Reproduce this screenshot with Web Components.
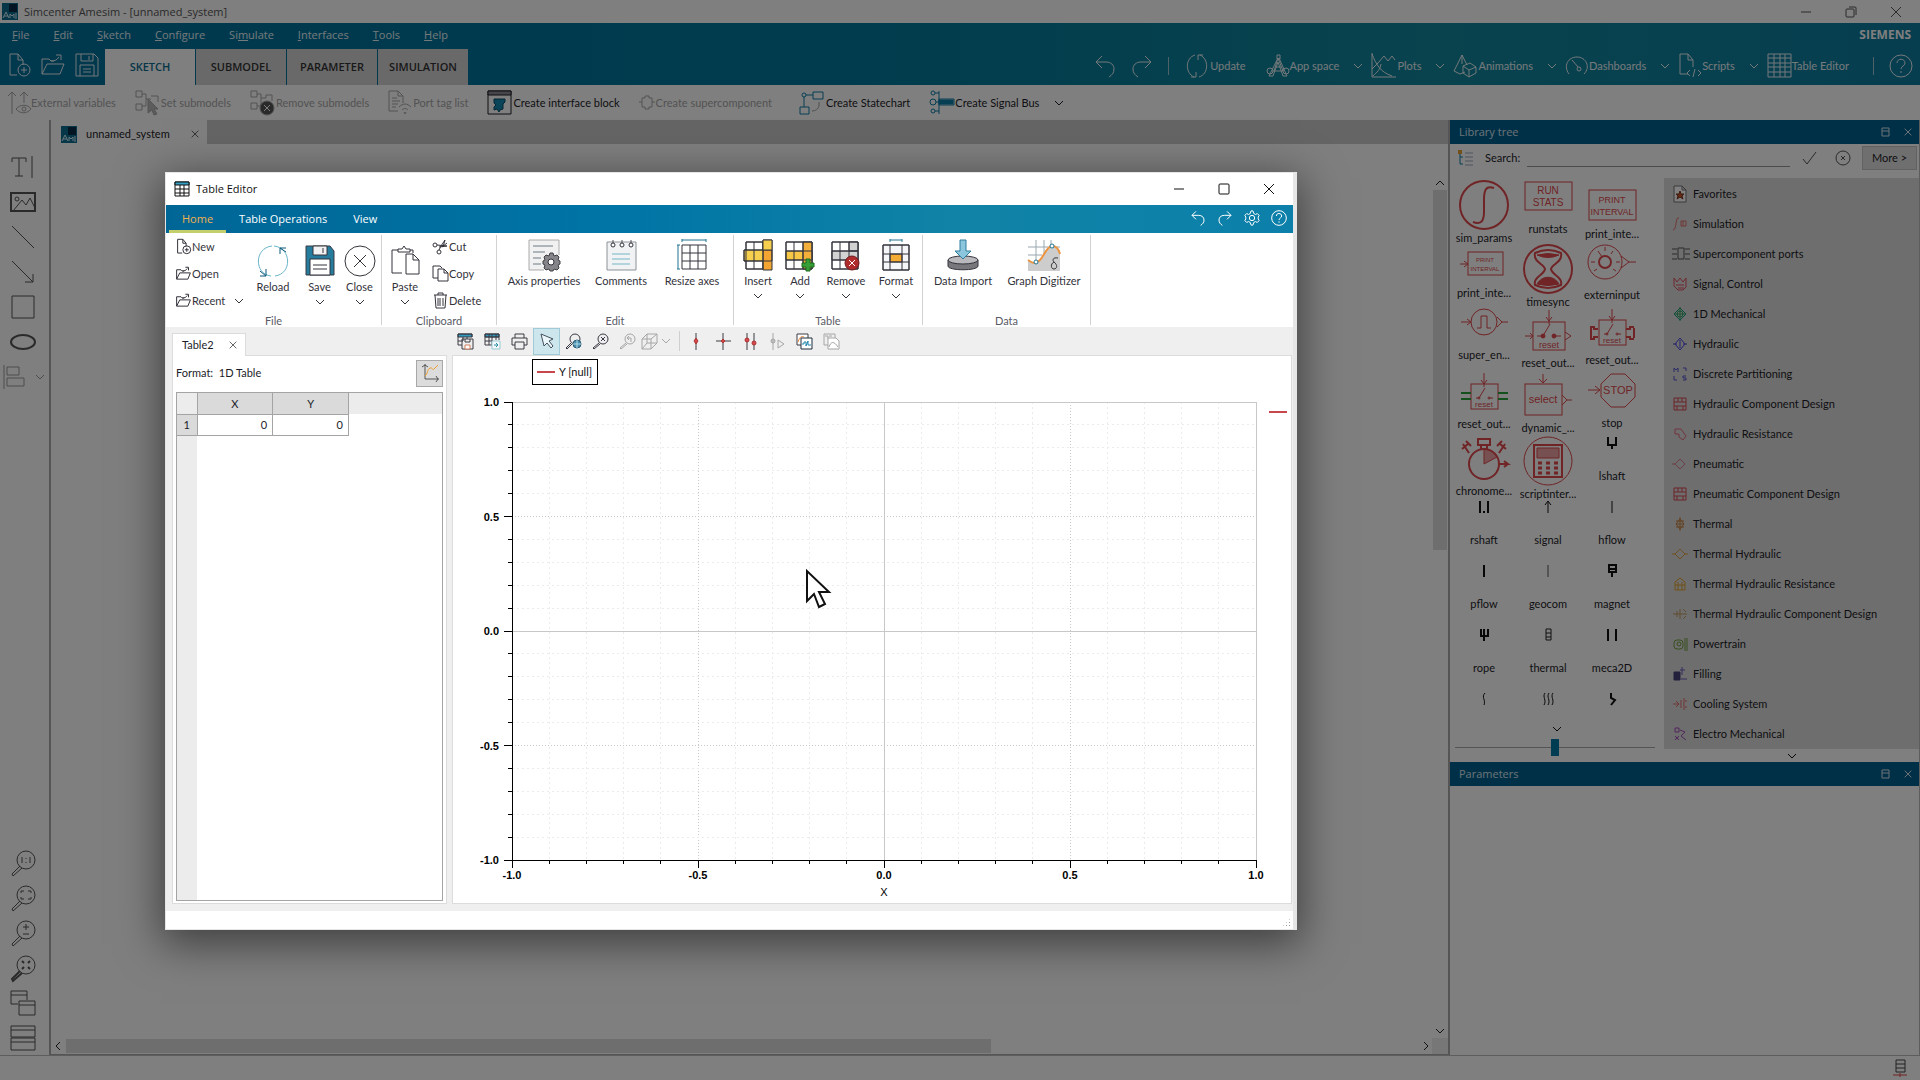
<!DOCTYPE html>
<html lang="en">
<head>
<meta charset="utf-8">
<title>Simcenter Amesim - [unnamed_system]</title>
<style>
  html, body {
    height: 100%;
    margin: 0;
  }
  body {
    --ui-font: Lato, "Open Sans", sans-serif;
    --title-font: "Open Sans", "Noto Sans", sans-serif;
    --red: #e0484c;
    font: 11px/16px var(--ui-font);
    color: #1c1c28;
    background: #fff;
    overflow: hidden;
  }
</style>
</head>
<body>
<amesim-app></amesim-app>

<script>
// name: [width, height, markup]
const ICONS = {
  chevron: [12, 8, '<path d="M2 2l4 4 4-4"/>'],
  close: [12, 12, '<path d="M1 1l10 10M11 1L1 11"/>'],
  minimize: [12, 12, '<path d="M1 6h10"/>'],
  maximize: [12, 12, '<rect x="1" y="1" width="10" height="10" rx="1"/>'],
  restore: [12, 12, '<rect x="1" y="3" width="8" height="8" rx="1"/><path d="M4 1h6q1 0 1 1v7"/>'],
  dock: [10, 10, '<path d="M1 1h7v8h-7zM1 4h7"/>'],
  ame: [16, 17, '<path d="M0 0h16v17H0z" fill="#0a6f93" stroke="none"/><path d="M7 1h8v8H7z" fill="#062b45" stroke="none"/><path d="M1 15l3-6 3 6M2 13h4M8 15v-4l2 2 2-2v4M13 11h2M13 13h2M13 15h2" stroke="#d6eef5"/>'],
  new: [24, 26, '<path d="M10 23H3V2h8l5 6v5M11 2v6h5"/><circle cx="17" cy="18" r="6"/><path d="M14 18h6M17 15v6"/>'],
  open: [24, 24, '<path d="M1 21V6h7l2 2h3M1 21l5-10h17l-4 10H1zM10 8c4 0 6-1 8-4M15 2h5v5"/>'],
  save: [24, 24, '<path d="M1 1h18l4 4v18H1zM6 1v7h12V1M14 3v4M5 23V12h14v11M8 16h8M8 19h8"/>'],
  undo: [22, 24, '<path d="M8 2L2 8l6 6M2 8h10c5 0 8 3 8 7s-2 6-5 8"/>'],
  redo: [22, 24, '<path d="M14 2l6 6-6 6M20 8H10c-5 0-8 3-8 7s2 6 5 8"/>'],
  update: [26, 26, '<path d="M10 24C1 20 1 5 11 2M7 24h5v-5M16 2c9 4 9 19-1 22M19 2h-5v5"/>'],
  appspace: [24, 24, '<path d="M8 17l4-13 5 13M10 13h5M11 1h3v4h-3z"/><circle cx="4" cy="17" r="3"/><circle cx="20" cy="17" r="3"/><path d="M7 17h10M12 4L3 22h4l5-14 5 14h4L13 4"/>'],
  plots: [26, 25, '<path d="M1 0v24h24M1 16l6-6 6-7 4 5 4-5 3 4M1 1c4 10 8 18 20 22M2 23c4-4 7-6 8-12"/>'],
  animations: [25, 25, '<path d="M9 2L1 18l6 3 5-2M9 2l5 10M9 2v9"/><path d="M10 13l7-3 6 4v6l-7 4-6-4zM10 13l6 4 7-3M16 17v7"/>'],
  dashboards: [24, 24, '<path d="M4 20C-2 12 3 3 12 3s14 10 7 17"/><circle cx="14" cy="15" r="2"/><path d="M13 13L7 6"/>'],
  scripts: [24, 25, '<path d="M10 21H2V1h8l5 6v7M10 1v6h5M12 17l-3 3 3 3M20 17l3 3-3 3M17 16l-2 8"/>'],
  grid: [25, 25, '<path d="M1 1h23v23H1zM1 5h23M1 10h23M1 14h23M1 19h23M7 1v23M13 1v23M18 1v23"/>'],
  help: [24, 24, '<circle cx="12" cy="12" r="11"/><path d="M8 9c0-5 8-5 8 0 0 3-4 3-4 6M12 17v2"/>'],
  gear: [18, 18, '<path d="M8 1h2l1 3 2 1 2-1 2 2-1 2v2l1 2-2 2-2-1-2 1-1 3H8l-1-3-2-1-2 1-2-2 1-2V8L1 6l2-2 2 1 2-1z"/><circle cx="9" cy="9" r="3"/>'],

  external: [24, 25, '<path d="M6 24V2M2 6l4-4 4 4M18 13V2M14 6l4-4 4 4"/><path d="M10 19c4-5 12-5 15 0-4 5-11 5-15 0z"/><circle cx="18" cy="19" r="2"/>'],
  setsub: [25, 25, '<path d="M1 1h6v6H1zM1 14h6v6H1zM7 4h4v12H7M11 9h5M16 6h7v6"/><path d="M13 9l10 10-4 0 3 5-3 1-2-5-4 3z" fill="#b8b8b8"/>'],
  removesub: [25, 25, '<path d="M1 1h6v6H1zM1 13h6v6H1zM7 4h4v12H7M11 8h5V5h6v6"/><circle cx="17" cy="18" r="7" fill="#555"/><path d="M14 15l6 6M20 15l-6 6" stroke="#fff"/>'],
  porttag: [24, 25, '<path d="M10 21H1V1h9l5 5v7M10 1v5h5M4 8h5M4 11h8M4 14h6M4 17h4"/><path d="M11 17c4-4 8-4 12 0M14 20c2-2 4-2 6 0M16 22l1 2 1-2"/>'],
  interface: [25, 25, '<path d="M1 1h23v23H1z"/><path d="M1 1h23v4H1z" fill="#8f8f96"/><path d="M7 9h11v3l-2 2v5l-3 1-1 2-2-3-3 1v-3l2-2-2-2z" fill="#1488b0" stroke="#0b4c66"/>'],
  supercomp: [16, 16, '<path d="M3 3h3V1h4v2h3v9h-3v2H6v-2H3zM0 7h3M13 7h3"/>'],
  statechart: [26, 25, '<g stroke="#0c7ca6"><path d="M14 2h10v7H14zM1 17h9v7H1zM5 17V7M7 5h7"/><circle cx="5" cy="5" r="2"/></g><path d="M20 12v3c0 4-4 6-7 6" stroke="#999"/>'],
  signalbus: [25, 25, '<g stroke="#0c7ca6"><circle cx="4" cy="3" r="2"/><circle cx="4" cy="12" r="3"/><circle cx="4" cy="21" r="2"/><path d="M10 1v23M6 3h4M7 12h3M6 21h4M10 9h15v6H10z"/><path d="M10 10h14v4H10z" fill="#0c7ca6"/></g>'],

  text: [24, 24, '<path d="M1 7V3h14v4M8 3v18M4 21h8M21 1v22"/>'],
  image: [26, 20, '<path d="M1 1h24v18H1z" stroke-width="2"/><circle cx="7" cy="7" r="2"/><path d="M3 19l9-11 4 5 4-7 5 10"/>'],
  line: [24, 24, '<path d="M1 1l22 22"/>'],
  arrow: [24, 24, '<path d="M1 1l21 21M14 22h8v-8"/>'],
  rect: [24, 24, '<path d="M1 1h22v22H1z"/>'],
  ellipse: [26, 16, '<ellipse cx="13" cy="8" rx="12" ry="7" stroke-width="2"/>'],
  align: [24, 24, '<path d="M1 0v24M4 2h12v8H4zM4 13h17v8H4z"/>'],
  zoom11: [26, 26, '<circle cx="16" cy="10" r="9"/><path d="M10 16l-8 8 1 2 9-8M12 7v6M20 7v6M16 8v1M16 12v1"/>'],
  zoomfit: [26, 26, '<circle cx="16" cy="10" r="9"/><path d="M10 16l-8 8 1 2 9-8M11 8V6h3M18 6h3v2M21 12v2h-3M14 14h-3v-2"/>'],
  zoompm: [26, 26, '<circle cx="16" cy="10" r="9"/><path d="M10 16l-8 8 1 2 9-8M13 7h6M16 4v6M13 14h6"/>'],
  zoomall: [26, 26, '<circle cx="16" cy="10" r="9"/><path d="M10 16l-8 8 1 2 9-8M12 6l2 2M20 6l-2 2M12 14l2-2M20 14l-2-2" stroke-width="2"/>'],
  cascade: [26, 26, '<path d="M8 14H1V1h16v9M1 5h16M9 11h16v14H9zM9 15h16"/>'],
  stack: [26, 26, '<path d="M1 1h24v11H1zM1 5h24M1 13h24v12H1zM1 17h24"/>'],
  server: [14, 18, '<path d="M3 1h9v12H3zM3 5h9M3 9h9"/><path d="M0 16h14M7 14v4" stroke="#e0484c"/>'],
  treeicon: [18, 18, '<path d="M4 4v11h3M4 8h3" stroke="#0c7ca6"/><path d="M2 1h4v4H2z" fill="#e8a030" stroke="none"/><path d="M9 4h8M9 8h8M9 12h8M9 16h8" stroke="#9ab"/>'],
  check: [16, 16, '<path d="M1 9l4 5L14 2"/>'],
  cancel: [18, 18, '<circle cx="9" cy="9" r="7"/><path d="M7 7l4 4M11 7l-4 4"/>'],

  tablegrid: [16, 16, '<path d="M1 1h14v14H1z"/><path d="M1 1h14v3H1z" fill="#35a0c4"/><path d="M1 8h14M1 12h14M6 4v11M10 4v11"/>'],
  reload: [32, 32, '<g stroke="#2f97b5"><path d="M14 31C-3 29-3 3 15 1M18 31C35 29 35 3 17 1" stroke="#69b5c9"/><path d="M3 31h6v-7M29 3h-6v6M23 3l6 4M9 31l-6-5" stroke="#0b5878"/></g>'],
  floppy: [30, 31, '<path d="M1 1h24l4 5v24H1z" fill="#257c9c" stroke="#3a3a44"/><path d="M8 1h14v9H8z" fill="#f2f2f2"/><path d="M18 3v5"/><path d="M5 30V14h20v16z" fill="#fff"/><path d="M8 20h14M8 24h14"/>'],
  closecircle: [32, 32, '<circle cx="16" cy="16" r="15"/><path d="M10 10l12 12M22 10L10 22"/>'],
  paste: [29, 30, '<path d="M11 28H1V5h6M19 5h3v3M7 7V4h4l2-3 2 3h4v3zM15 9h7l6 6v14H15zM22 9v6h6"/>'],
  cut: [17, 16, '<circle cx="3" cy="6" r="2"/><circle cx="7" cy="13" r="2"/><path d="M5 6l10 1-8 1M7 11l2-4 4-6-2 7M10 8l5-4"/>'],
  copy: [17, 17, '<path d="M6 13H1V1h7l2 2M6 4h6l4 4v8H6zM12 4v4h4"/>'],
  trash: [17, 17, '<path d="M2 3h13M6 3V1h5v2M3 3l1 13h9l1-13M6 6v8M8 6v8M11 6v8"/>'],
  axisprops: [32, 32, '<path d="M1 1h30v18L19 31H1z" fill="#f1f1f1" stroke="none"/><path d="M1 31V1h30v15M1 31h15" stroke="#aaa"/><path d="M5 7h20M5 13h12M5 19h8M5 25h8" stroke="#6a7a84"/><path d="M22 14h3l1 3 3-1 2 2-1 3 2 1v3l-2 1 1 3-2 2-3-1-1 2h-3l-1-2-3 1-2-2 1-3-2-1v-3l2-1-1-3 2-2 3 1z" fill="#85858a" stroke="#3e3e44"/><circle cx="23" cy="23" r="3" fill="#fff"/>'],
  comments: [31, 32, '<path d="M1 3h29v28H1z" fill="#f0f2f3" stroke="#8c9296"/><path d="M7 1v4M16 1v4M25 1v4" stroke="#555"/><circle cx="7" cy="6" r="2" fill="#fff"/><circle cx="16" cy="6" r="2" fill="#fff"/><circle cx="25" cy="6" r="2" fill="#fff"/><path d="M6 15h18M6 20h18M6 25h18" stroke="#74b6c8"/>'],
  resizeaxes: [30, 32, '<path d="M5 6h24v24H5zM5 14h24M5 22h24M13 6v24M21 6v24"/><path d="M5 1h24M5 0v3M29 0v3M1 6v24M0 6h3M0 30h3" stroke="#1f7391"/>'],
  insert: [30, 32, '<path d="M3 3h17v27H3z" fill="#fff"/><path d="M1 11h20v11H1z" fill="#f7cf4e"/><path d="M20 1h9v30h-9z" fill="#f2a531"/><path d="M3 3h17v27H3zM11 3v27M1 11h28v11H1z"/><path d="M20 1h9v10h-9z" fill="#f7cf4e"/>'],
  addcell: [30, 32, '<path d="M1 3h26v27H1z" fill="#fff"/><path d="M1 12h26v9H1z" fill="#f7c846"/><path d="M18 3h9v27h-9z" fill="#f2b03a"/><path d="M1 3h26v27H1zM1 12h26M1 21h26M9 3v27M18 3v27"/><path d="M21 20h4v4h4v4h-4v4h-4v-4h-4v-4h4z" fill="#36a036" stroke="#1c6b1c"/>'],
  removecell: [30, 32, '<path d="M1 3h26v27H1z" fill="#fff"/><path d="M1 12h26v9H1zM18 3h9v9h-9z" fill="#d2d2d2"/><path d="M1 3h26v27H1zM1 12h26M1 21h26M9 3v27M18 3v27"/><circle cx="21" cy="24" r="7" fill="#b02c2c" stroke="#6d1d1d"/><path d="M18 21l6 6M24 21l-6 6" stroke="#fff"/>'],
  format: [28, 32, '<path d="M1 6h26v25H1z" fill="#f4f6f8"/><path d="M8 15h12v8H8z" fill="#f4ac34"/><path d="M1 6h26v25H1zM1 15h26M1 23h26M8 6v25M20 6v25"/><path d="M8 1h12M8 0v3M20 0v3" stroke="#1f7391"/>'],
  dataimport: [32, 32, '<path d="M1 21v6c0 5 30 5 30 0v-6" fill="#77777c"/><ellipse cx="16" cy="21" rx="15" ry="4" fill="#b9b9bd"/><path d="M13 1h6v11h5l-8 8-8-8h5z" fill="#8cc6dc" stroke="#2f7d9c"/>'],
  digitizer: [32, 32, '<path d="M0 21c6 3 8 4 12 0s7-14 12-14 7 4 8 8v17H0z" fill="#cdcdcd" stroke="none"/><path d="M8 1v20M16 1v14M23 1v6M0 8h20M0 16h14M27 8h5" stroke="#9aa8b0"/><path d="M0 21c6 4 8 4 12 0s7-14 12-14 7 4 8 8" stroke="#ec9440" stroke-width="2"/><circle cx="8" cy="23" r="2" fill="#fff" stroke="#1f7391"/><circle cx="24" cy="7" r="2" fill="#fff" stroke="#1f7391"/><path d="M30 19c-5-1-6 2-4 4 4 3 3 7 0 7s-4-5 0-7"/>'],
  savetable: [17, 17, '<path d="M1 1h14v3H1z" fill="#2f9cc0"/><path d="M5 12H1V1h14v3M1 8h5M6 4v4M10 4v2M5 6h11v10H5zM8 6v3h5V6"/><path d="M8 12h5v4H8z" fill="#fff" stroke="#d08060"/>'],
  exporttable: [17, 17, '<path d="M1 1h14v3H1z" fill="#2f9cc0"/><path d="M8 12H1V1h14v6M1 4h14M1 8h8M5 1v11M8 1v11M12 1v6"/><path d="M8 8h8v8H8z" fill="#f4fafc" stroke="#9cc8d6"/><path d="M10 12h4M12 10l2 2-2 2" stroke="#2c8ba8"/>'],
  print: [17, 17, '<path d="M4 5V1h9v4M4 12H1V5h15v7h-3M4 9h9v7H4z"/>'],
  pointer: [16, 17, '<path d="M2 1l3 12 3-3 4 5 2-2-4-5 4-2z" fill="#eaf6fa" stroke="#44505c"/>'],
  zoomglobe: [17, 17, '<circle cx="10" cy="6" r="5"/><path d="M6 10l-5 5 1 1 5-5"/><circle cx="12" cy="11" r="4" fill="#4a8eae" stroke="#2a5b73"/><path d="M8 11h8M12 7v8" stroke="#b3dbe8"/>'],
  zoomx: [17, 17, '<circle cx="11" cy="6" r="5"/><path d="M7 10l-6 5 1 1 6-5M9 4l4 4M13 4L9 8"/>'],
  zoomback: [17, 17, '<circle cx="11" cy="6" r="5"/><path d="M7 10l-6 5 1 1 6-5M10 3L8 5l2 2M8 5h4v4"/>'],
  cube: [17, 17, '<path d="M1 6h9v10H1zM6 1h10v9H6zM1 6l5-5M10 6l6-5M10 16l6-6M1 16l5-6"/>'],
  cursor1: [15, 17, '<path d="M7 0v17"/><path d="M7 5l2 3-2 3-2-3z" fill="#d8474c" stroke="#a33"/>'],
  cursor2: [15, 17, '<path d="M7 0v17M0 8h15"/><path d="M7 6l2 2-2 2-2-2z" fill="#d8474c" stroke="#a33"/>'],
  cursor3: [15, 17, '<path d="M4 0v17M11 0v17"/><circle cx="4" cy="7" r="2" fill="#d8474c" stroke="#a33"/><circle cx="11" cy="10" r="2" fill="#d8474c" stroke="#a33"/>'],
  cursorplay: [15, 17, '<path d="M3 0v17M8 7l6 4-6 4z"/><circle cx="3" cy="8" r="2" fill="#bbb"/>'],
  copyplot: [17, 17, '<path d="M5 12H1V1h11v4" fill="#fff"/><path d="M2 9c2-6 4-6 6-5" stroke="#e9873c"/><path d="M5 5h11v11H5z" fill="#fff" stroke="#1c2f3c"/><path d="M6 11h2v-2h2v4l2-5v4h3" stroke="#1c86ac"/>'],
  pasteplot: [17, 17, '<path d="M5 12H1V1h11v4M2 3h3v3M6 3h3"/><path d="M5 5h8l3 3v8H5z" fill="#fff"/><path d="M6 14c2-6 5-6 9 0"/>'],
  curve: [18, 18, '<path d="M4 0v15h14M1 3l3-2 3 2M15 12l2 3-2 3" stroke="#555"/><path d="M4 12c3-2 2-7 5-8s2 3 4 1l4-4" stroke="#f0a030"/>'],
  mouse: [27, 40, '<path d="M2 2v30l7-7 5 13 6-3-6-12h10z" fill="#fff" stroke="#111" stroke-width="2"/>'],

  favorites: [16, 18, '<path d="M2 1h8l4 4v12H2zM10 1v4h4" stroke="#777" fill="#fff"/><path d="M8 6l1 3h3l-2 2 1 3-3-2-3 2 1-3-2-2h3z" fill="#c9502c" stroke="#7a3a1c"/>'],
  simulation: [16, 16, '<path d="M7 2c-4-2-2 12-6 12" stroke="#e07070"/><path d="M9 5h5v5H9zM11 5v5" stroke="#e07070"/>'],
  ports: [18, 16, '<path d="M6 2h6v11H6zM0 3h5M0 8h5M0 13h5M13 3h5M13 8h5M13 13h5" stroke="#555"/>'],
  signal: [16, 16, '<path d="M2 2l3 4 3-4 3 4 3-4v9l-3 3H6l-4-4zM4 9h8M6 12h6" stroke="#e05060"/>'],
  mechanical: [16, 16, '<path d="M8 2l6 6-6 6-6-6z" stroke="#189c8c"/><circle cx="8" cy="8" r="3" stroke="#30a060"/><path d="M8 1v14M2 8h12" stroke="#30a060"/>'],
  hydraulic: [16, 16, '<path d="M8 2l5 6-5 6-5-6z" stroke="#4848d8"/><path d="M1 8h4M11 8h4M8 4v8" stroke="#4848d8"/>'],
  partition: [16, 16, '<path d="M2 6V2l2 2 2-2v4M11 2h3v3M2 10v4h3M14 10h-3v2h3v2h-3" stroke="#5656cc"/>'],
  component: [16, 16, '<path d="M2 2h12v12H2zM2 6h12M2 10h12M6 2v4M10 2v4M5 10v4M11 10v4" stroke="#d84a55"/>'],
  resistance: [16, 16, '<path d="M3 3h6l5 7-3 4-4-3V8H3z" stroke="#e06a80"/>'],
  pneumatic: [16, 16, '<path d="M8 3l5 5-5 5-5-5zM0 8h3" stroke="#d87a8c"/>'],
  thermal: [16, 16, '<path d="M8 1v14M4 5h8M4 8h8M4 11h8" stroke="#c88040"/><path d="M8 3l4 5-4 5-4-5z" stroke="#c88040"/>'],
  thydraulic: [16, 16, '<path d="M8 3l5 5-5 5-5-5zM0 8h3M13 8h3" stroke="#e0a040"/>'],
  thresist: [16, 16, '<path d="M3 14V6l5-4 5 4v8zM3 9h10M6 6v8M10 6v8" stroke="#e0a030"/>'],
  thcomp: [16, 16, '<path d="M1 8h14M8 3v10M5 5v6M11 3l3 3M11 13l3-3" stroke="#bf9a60"/>'],
  powertrain: [16, 16, '<rect x="2" y="4" width="9" height="9" rx="3" stroke="#6ea03c"/><path d="M13 2v13M15 2v13" stroke="#6ea03c"/><circle cx="7" cy="8" r="2" stroke="#6ea03c"/>'],
  filling: [16, 16, '<path d="M2 6h6v8H2z" fill="#44407a" stroke="#44407a"/><path d="M8 4h5M10 1v8M9 13h6" stroke="#6a5ac0"/>'],
  cooling: [16, 16, '<path d="M12 2v12M9 4v8M1 8h6M4 5l3 3-3 3M14 4v2M14 10v2" stroke="#e06a6a"/>'],
  electro: [16, 16, '<path d="M3 2h4v4H3zM8 4l5 2-4 4 5 4M3 10l4 4M3 14l4-4" stroke="#a04ab8"/>'],
};

// Library components: [label, icon height, markup]; every drawing is 50px wide.
const RESET = `<rect x="12" y="12" width="27" height="25"/><path d="M25 1v14M22 8l3 4 3-4M17 26h3M30 26h4M20 26l6-10"/>
  <circle cx="20" cy="26" r="1"/><circle cx="30" cy="26" r="1"/><text x="25" y="35" font-size="8">reset</text>`;
const COMPONENTS = [
  ['sim_params', 49, '<circle cx="25" cy="25" r="24" stroke-width="2"/><path d="M35 8c-8-3-10 2-10 12v12c0 9-3 13-11 10" stroke-width="2"/>'],
  ['runstats', 40, '<rect x="2" y="2" width="47" height="28"/><text x="25" y="14" font-size="10">RUN</text><text x="25" y="26" font-size="10">STATS</text>'],
  ['print_inte...', 45, '<rect x="2" y="10" width="47" height="30"/><text x="25" y="23" font-size="9">PRINT</text><text x="25" y="35" font-size="9">INTERVAL</text>'],
  ['print_inte...', 40, '<rect x="9" y="8" width="35" height="23"/><path d="M1 20h8M5 17l4 3-4 3"/><text x="26" y="18" font-size="6">PRINT</text><text x="26" y="27" font-size="6">INTERVAL</text>'],
  ['timesync', 49, '<circle cx="25" cy="25" r="24" stroke-width="2"/><path d="M12 9q13-6 26 0c2 9-9 11-10 16 1 6 12 8 10 16q-13 6-26 0c-2-8 9-10 10-16C21 20 10 18 12 9z" stroke-width="2"/><path d="M14 40c5-9 17-9 22 0q-11 3-22 0zM14 11q11-3 22 0-11 5-22 0z" fill="#e0484c"/>'],
  ['externinput', 42, '<circle cx="18" cy="18" r="17"/><circle cx="18" cy="18" r="6" stroke-width="2"/><path d="M11 7l4 6M18 3v4M26 7l-2 3M4 18h4M7 27l3-2M33 18h-4M29 27l-3-2M34 12l8 6-8 6M42 18h7"/>'],
  ['super_en...', 38, '<circle cx="25" cy="14" r="13"/><path d="M18 20h4V8h6v12h4M2 14h9M8 11l4 3-4 3M38 9l5 5-5 5M43 14h6"/>'],
  ['reset_out...', 46, '<rect x="10" y="14" width="32" height="28"/><path d="M26 2v14M23 9l3 4 3-4M14 28h5M32 28h6M20 28l7-12M2 28h8M7 25l3 3-3 3M42 24l6 4-6 4"/><circle cx="20" cy="28" r="2" fill="#e0484c"/><circle cx="31" cy="28" r="2" fill="#e0484c"/><text x="26" y="40" font-size="9">reset</text>'],
  ['reset_out...', 43, RESET + '<path d="M11 21H7v-2H3M11 29H7v2H3M4 20v10M39 21h4v-2h4M39 29h4v2h4M47 20v10" stroke-width="2"/>'],
  ['reset_out...', 43, RESET + '<path d="M2 21h10M2 27h10M39 21h10M39 27h10" stroke="#28a038" stroke-width="2"/>'],
  ['dynamic_...', 47, '<rect x="2" y="12" width="37" height="31"/><path d="M20 2v9M16 7l4 4 4-4M39 23l5 5-5 5M44 28h5"/><text x="20" y="31" font-size="11">select</text>'],
  ['stop', 42, '<path d="M24 2h14l10 10v13L38 35H24L14 25V12zM1 18h12M8 14l5 4-5 4"/><text x="31" y="22" font-size="11">STOP</text>'],
  ['chronome...', 46, '<circle cx="25" cy="28" r="15" stroke-width="2"/><path d="M25 28V13a15 15 0 0 1 13 8z" fill="#e0484c" fill-opacity="0.5"/><path d="M19 3h12v6H19zM22 9v4M28 9v4M10 17l-6-9M3 13l6-5M40 17l6-9M41 8l6 5M7 5l5 5M43 5l-5 5M40 28h9l-4-3M49 28l-4 3" stroke-width="2"/>'],
  ['scriptinter...', 49, '<circle cx="25" cy="25" r="24"/><rect x="11" y="9" width="28" height="32" stroke-width="2"/><path d="M14 12h22v10H14z" fill="#e0484c" fill-opacity="0.5"/><path d="M15 27h4M23 27h4M31 27h4M15 32h4M23 32h4M31 32h4M15 37h4M23 37h4M31 37h4" stroke-width="3"/>'],
  ['lshaft', 31, '<path d="M21 1v8h8V1M25 9v4" stroke="#111" stroke-width="2"/>'],
  ['rshaft', 31, '<path d="M21 1v12M29 1v12M25 11v2" stroke="#111" stroke-width="2"/>'],
  ['signal', 31, '<path d="M25 13V2M22 5l3-4 3 4" stroke="#111"/>'],
  ['hflow', 31, '<path d="M25 1v12" stroke="#111"/>'],
  ['pflow', 31, '<path d="M25 1v12" stroke="#111" stroke-width="2"/>'],
  ['geocom', 31, '<path d="M25 1v12" stroke="#555"/>'],
  ['magnet', 31, '<path d="M22 1h7v7h-7zM25 8v5M22 5h7" stroke="#111" stroke-width="2"/>'],
  ['rope', 31, '<path d="M22 1v7h7V1M25 1v12" stroke="#111" stroke-width="2"/>'],
  ['thermal', 31, '<path d="M23 1h5v11h-5zM23 5h5M23 9h5" stroke="#222"/>'],
  ['meca2D', 31, '<path d="M21 1v12M29 1v12" stroke="#111" stroke-width="2"/>'],
  ['', 31, '<path d="M26 1c-4 4 1 7-1 12" stroke="#111"/>'],
  ['', 31, '<path d="M22 1c-3 4 2 7-1 12M26 1c-3 4 2 7-1 12M30 1c-3 4 2 7-1 12" stroke="#111"/>'],
  ['', 31, '<path d="M24 1v5l4 2-4 5" stroke="#111" stroke-width="2"/>'],
];

const LIBRARIES = [
  ['favorites', 'Favorites'], ['simulation', 'Simulation'], ['ports', 'Supercomponent ports'],
  ['signal', 'Signal, Control'], ['mechanical', '1D Mechanical'], ['hydraulic', 'Hydraulic'],
  ['partition', 'Discrete Partitioning'], ['component', 'Hydraulic Component Design'],
  ['resistance', 'Hydraulic Resistance'], ['pneumatic', 'Pneumatic'],
  ['component', 'Pneumatic Component Design'], ['thermal', 'Thermal'],
  ['thydraulic', 'Thermal Hydraulic'], ['thresist', 'Thermal Hydraulic Resistance'],
  ['thcomp', 'Thermal Hydraulic Component Design'], ['powertrain', 'Powertrain'],
  ['filling', 'Filling'], ['cooling', 'Cooling System'], ['electro', 'Electro Mechanical'],
];

const SHARED = `
  * { box-sizing: border-box; }
  button {
    margin: 0;
    padding: 0;
    border: 0;
    background: none;
    font: inherit;
    color: inherit;
    display: inline-flex;
    align-items: center;
    justify-content: center;
  }
`;

class UiElement extends HTMLElement {
  constructor() {
    super();
    this.attachShadow({ mode: 'open' });
  }

  connectedCallback() {
    this.shadowRoot.innerHTML = `<style>${SHARED}${this.styles()}</style>${this.render()}`;
  }

  styles() {
    return ':host { display: block; }';
  }

  render() {
    return '<slot></slot>';
  }

  attr(name, fallback = '') {
    return this.getAttribute(name) ?? fallback;
  }
}

class UiIcon extends UiElement {
  styles() {
    return `
      :host { display: inline-block; flex: none; line-height: 0; }
      svg { display: block; overflow: visible; }
      svg * { vector-effect: non-scaling-stroke; }
    `;
  }

  render() {
    const [w, h, markup] = ICONS[this.attr('name')];
    return `<svg width="${this.attr('w', w)}" height="${this.attr('h', h)}" viewBox="0 0 ${w} ${h}"
      fill="none" stroke="currentColor" aria-hidden="true">${markup}</svg>`;
  }
}

// Icon + label button. "large" stacks them, "menu" adds the drop-down arrow.
class ToolButton extends UiElement {
  styles() {
    return `
      :host { display: inline-flex; justify-content: center; white-space: nowrap; }
      button { gap: var(--tool-gap, 1px); }
      button:disabled { color: #a6a6a6; }
      .arrow { margin-left: var(--arrow-gap, 13px); }
      :host([large]) button { flex-direction: column; justify-content: flex-start; gap: 0; }
      :host([large]) .arrow { margin: 3px 0 0; }
      :host([large]) .icon { height: 34px; }
      :host([pressed]) button {
        width: 27px;
        height: 27px;
        background: #cde6ee;
        outline: 1px solid #9fcbd9;
        outline-offset: -1px;
      }
    `;
  }

  render() {
    const size = `${this.hasAttribute('w') ? `w="${this.attr('w')}"` : ''} ${this.hasAttribute('h') ? `h="${this.attr('h')}"` : ''}`;
    const label = this.attr('label');
    return `
      <button type="button" ${this.hasAttribute('off') ? 'disabled' : ''} aria-label="${label || this.attr('icon')}">
        <ui-icon class="icon" name="${this.attr('icon')}" ${size}></ui-icon>
        ${label ? `<span>${label}</span>` : ''}
        ${this.hasAttribute('menu') ? '<ui-icon class="arrow" name="chevron"></ui-icon>' : ''}
      </button>`;
  }
}

class TitleBar extends UiElement {
  styles() {
    return `
      :host {
        display: flex;
        align-items: center;
        height: var(--title-height, 23px);
        font-family: var(--title-font);
      }
      .name { flex: 1; padding-left: 6px; }
      .controls { display: flex; gap: 33px; padding-right: 18px; }
    `;
  }

  render() {
    return `
      <slot name="icon"></slot>
      <span class="name"><slot></slot></span>
      <span class="controls">
        <button type="button" aria-label="Minimize"><ui-icon name="minimize"></ui-icon></button>
        <button type="button" aria-label="Maximize"><ui-icon name="${this.attr('max', 'maximize')}"></ui-icon></button>
        <button type="button" aria-label="Close"><ui-icon name="close"></ui-icon></button>
      </span>`;
  }
}

class AppHeader extends UiElement {
  styles() {
    return `
      :host {
        display: block;
        color: #e8f2f6;
        background: linear-gradient(90deg, #00709c, #00779c 40%, #12869c 75%, #0c7ca0);
      }
      .row { display: flex; align-items: center; justify-content: space-between; }
      .top { height: 26px; padding-bottom: 2px; font-family: var(--title-font); }
      .bottom { height: 36px; align-items: stretch; }
      nav { display: flex; gap: 24px; padding-left: 12px; }
      .brand { padding-right: 9px; font-size: 12px; font-weight: 700; color: #fff; }
      .files { display: flex; align-items: center; gap: 10px; padding: 0 6px 4px 7px; }
      .left, .right { display: flex; }
      .right { align-items: center; padding: 0 7px 3px 0; }
      .right tool-button { margin-right: 20px; --tool-gap: 0; }
      .right tool-button[menu] { margin-right: 7px; }
      .right .nav { margin-right: 15px; }
      .right .wide { margin-right: 24px; }
      .right tool-button.last { margin: 0; }
      .sep { width: 1px; height: 18px; margin-right: 15px; background: #9cc4d0; }
      .tabs { display: flex; gap: 1px; }
      .tabs button {
        width: 90px;
        background: #d2d2d2;
        color: #333;
        font-family: var(--title-font);
        font-weight: 600;
      }
      .tabs button[aria-selected=true] { background: #fff; color: #0a6d8e; }
    `;
  }

  render() {
    const menus = ['<u>F</u>ile', '<u>E</u>dit', '<u>S</u>ketch', '<u>C</u>onfigure', 'Si<u>m</u>ulate',
      '<u>I</u>nterfaces', '<u>T</u>ools', '<u>H</u>elp'];
    const tabs = ['SKETCH', 'SUBMODEL', 'PARAMETER', 'SIMULATION'];
    return `
      <div class="row top">
        <nav>${menus.map((m) => `<button type="button"><span>${m}</span></button>`).join('')}</nav>
        <span class="brand">SIEMENS</span>
      </div>
      <div class="row bottom">
        <div class="left">
          <div class="files">
            <tool-button icon="new"></tool-button>
            <tool-button icon="open"></tool-button>
            <tool-button icon="save"></tool-button>
          </div>
          <div class="tabs" role="tablist">
            ${tabs.map((t, i) => `<button type="button" role="tab" aria-selected="${i === 0}">${t}</button>`).join('')}
          </div>
        </div>
        <div class="right">
          <tool-button class="nav" icon="undo"></tool-button>
          <tool-button class="nav" icon="redo"></tool-button>
          <span class="sep"></span>
          <tool-button icon="update" label="Update"></tool-button>
          <tool-button icon="appspace" label="App space" menu></tool-button>
          <tool-button icon="plots" label="Plots" menu></tool-button>
          <tool-button icon="animations" label="Animations" menu></tool-button>
          <tool-button icon="dashboards" label="Dashboards" menu></tool-button>
          <tool-button icon="scripts" label="Scripts" menu></tool-button>
          <tool-button class="wide" icon="grid" label="Table Editor"></tool-button>
          <span class="sep"></span>
          <tool-button class="last" icon="help"></tool-button>
        </div>
      </div>`;
  }
}

class SketchToolbar extends UiElement {
  styles() {
    return `
      :host {
        display: flex;
        align-items: center;
        gap: 27px;
        height: 35px;
        padding-left: 6px;
      }
      .group { display: flex; align-items: center; gap: 19px; }
    `;
  }

  render() {
    return `
      <div class="group">
        <tool-button off icon="external" label="External variables"></tool-button>
        <tool-button off icon="setsub" label="Set submodels"></tool-button>
        <tool-button off icon="removesub" label="Remove submodels"></tool-button>
        <tool-button off icon="porttag" label="Port tag list"></tool-button>
        <tool-button icon="interface" label="Create interface block"></tool-button>
        <tool-button off icon="supercomp" label="Create supercomponent"></tool-button>
      </div>
      <div class="group">
        <tool-button icon="statechart" label="Create Statechart"></tool-button>
        <tool-button icon="signalbus" label="Create Signal Bus" menu></tool-button>
      </div>`;
  }
}

class SideTools extends UiElement {
  styles() {
    return `
      :host {
        display: flex;
        flex-direction: column;
        width: 49px;
        padding-top: 29px;
        color: #555;
      }
      tool-button { width: 46px; height: 35px; --arrow-gap: 6px; }
      .wide { width: 49px; color: #999; }
      .gap { flex: 1; }
    `;
  }

  render() {
    const draw = ['text', 'image', 'line', 'arrow', 'rect', 'ellipse'];
    const view = ['zoom11', 'zoomfit', 'zoompm', 'zoomall', 'cascade', 'stack'];
    const button = (icon) => `<tool-button icon="${icon}"></tool-button>`;
    return `
      ${draw.map(button).join('')}
      <tool-button class="wide" icon="align" menu></tool-button>
      <span class="gap"></span>
      ${view.map(button).join('')}`;
  }
}

class SketchArea extends UiElement {
  styles() {
    return `
      :host {
        display: grid;
        grid-template: 24px 1fr 16px / 1fr 16px;
        border: solid #aaa;
        border-width: 0 2px 1px 2px;
      }
      .tabs { grid-column: 1 / -1; display: flex; background: #cacaca; }
      .tab {
        display: flex;
        align-items: center;
        gap: 9px;
        width: 156px;
        padding: 4px 8px 0 10px;
        background: #fff;
      }
      .tab span { flex: 1; }
      .tab button { color: #666; }
      .vbar, .hbar { display: flex; align-items: center; color: #222; }
      .vbar { flex-direction: column; gap: 3px; padding: 35px 0 3px; }
      .hbar { gap: 2px; padding-left: 1px; }
      .vbar i { width: 14px; height: 42%; background: #dcdcdc; }
      .hbar i { width: 67%; height: 14px; background: #dcdcdc; }
      .fill { flex: 1; }
      .up { transform: rotate(180deg); }
      .left { transform: rotate(90deg); }
      .right { transform: rotate(-90deg); }
      .corner { background: #eee; }
    `;
  }

  render() {
    return `
      <div class="tabs">
        <div class="tab">
          <ui-icon name="ame"></ui-icon><span>unnamed_system</span>
          <button type="button" aria-label="Close tab"><ui-icon name="close" w="8" h="8"></ui-icon></button>
        </div>
      </div>
      <div></div>
      <div class="vbar">
        <ui-icon class="up" name="chevron"></ui-icon><i></i><span class="fill"></span>
        <ui-icon name="chevron"></ui-icon>
      </div>
      <div class="hbar">
        <ui-icon class="left" name="chevron"></ui-icon><i></i><span class="fill"></span>
        <ui-icon class="right" name="chevron"></ui-icon>
      </div>
      <div class="corner"></div>`;
  }
}

class DockPanel extends UiElement {
  styles() {
    return `
      :host { display: flex; flex-direction: column; }
      header {
        display: flex;
        align-items: center;
        gap: 13px;
        height: 24px;
        padding: 0 7px 0 9px;
        background: #00608f;
        color: #d8e6ee;
      }
      h2 { flex: 1; margin: 0; font: 400 11px/16px var(--title-font); }
      .body { flex: 1; }
    `;
  }

  render() {
    return `
      <header>
        <h2>${this.attr('heading')}</h2>
        <button type="button" aria-label="Float"><ui-icon name="dock"></ui-icon></button>
        <button type="button" aria-label="Close"><ui-icon name="close" w="8" h="8"></ui-icon></button>
      </header>
      <div class="body"><slot></slot></div>`;
  }
}

class LibraryTree extends UiElement {
  styles() {
    return `
      :host { display: block; }
      .search {
        display: flex;
        align-items: center;
        height: 34px;
        padding: 0 2px 7px 6px;
      }
      .search label { margin: 0 7px 0 11px; }
      .search input {
        flex: 1;
        min-width: 0;
        height: 18px;
        border: 0;
        border-bottom: 1px solid #999;
        outline: 0;
        background: none;
      }
      .search ui-icon { color: #555; }
      .ok { margin: 0 16px 0 12px; }
      .more {
        width: 55px;
        height: 24px;
        margin-left: 10px;
        background: #dedede;
        border: 1px solid #c4c4c4;
      }
      .panes { display: grid; grid-template-columns: 214px 1fr; }
      .left { display: flex; flex-direction: column; }
      .grid {
        display: grid;
        grid-template-columns: repeat(3, 64px);
        grid-auto-rows: 64px;
        flex: 1 1 0;
        min-height: 0;
        padding: 2px 0 0 2px;
        overflow: hidden;
      }
      .item { display: flex; flex-direction: column; align-items: center; line-height: 17px; }
      .item svg { flex: none; stroke: var(--red); fill: none; overflow: visible; }
      .item text {
        fill: var(--red);
        stroke: none;
        text-anchor: middle;
        font-family: "Liberation Sans", sans-serif;
      }
      .more-down { display: flex; justify-content: center; align-items: center; height: 13px; color: #111; }
      input[type=range] {
        appearance: none;
        width: 200px;
        height: 18px;
        margin: 3px 0 6px 5px;
        background: linear-gradient(#aaa, #aaa) center / 100% 1px no-repeat;
      }
      input[type=range]::-webkit-slider-thumb {
        appearance: none;
        width: 8px;
        height: 17px;
        background: #007ba6;
      }
      ul { margin: 0; padding: 1px 0 0; list-style: none; background: #dcdcdc; }
      li { display: flex; align-items: center; gap: 5px; height: 30px; padding-left: 8px; }
      li ui-icon { width: 16px; }
    `;
  }

  render() {
    return `
      <div class="search">
        <ui-icon name="treeicon"></ui-icon>
        <label for="search">Search:</label>
        <input id="search" type="text">
        <button class="ok" type="button" aria-label="Apply"><ui-icon name="check"></ui-icon></button>
        <button type="button" aria-label="Clear"><ui-icon name="cancel"></ui-icon></button>
        <button class="more" type="button">More &gt;</button>
      </div>
      <div class="panes">
        <div class="left">
          <div class="grid">
            ${COMPONENTS.map(([label, h, markup]) => `
              <div class="item"><svg width="50" height="${h}">${markup}</svg>${label}</div>`).join('')}
          </div>
          <div class="more-down"><ui-icon name="chevron"></ui-icon></div>
          <input type="range" min="0" max="100" value="50" aria-label="Icon size">
        </div>
        <div>
          <ul>${LIBRARIES.map(([icon, label]) => `<li><ui-icon name="${icon}"></ui-icon>${label}</li>`).join('')}</ul>
          <div class="more-down"><ui-icon name="chevron"></ui-icon></div>
        </div>
      </div>`;
  }
}

class RibbonGroup extends UiElement {
  styles() {
    return `
      :host {
        display: grid;
        grid-template-rows: 80px 14px;
        border-right: 1px solid #d2d2d2;
        border-image: linear-gradient(transparent 3px, #d2d2d2 3px, #d2d2d2 91px, transparent 91px) 1;
      }
      .tools { display: grid; grid-template-columns: var(--cols); padding: var(--pad, 6px 4px 0); }
      .label { text-align: center; color: #5a5a66; line-height: 16px; }
      ::slotted(.stack) {
        display: grid;
        grid-auto-rows: 27px;
        justify-content: start;
        justify-items: start;
        align-items: center;
        margin-top: -12px;
      }
    `;
  }

  render() {
    return `<div class="tools"><slot></slot></div><div class="label">${this.attr('label')}</div>`;
  }
}

class EditorRibbon extends UiElement {
  styles() {
    return `
      :host { display: block; }
      nav {
        display: flex;
        align-items: stretch;
        height: 28px;
        padding: 0 6px 0 3px;
        color: #fff;
        background: linear-gradient(90deg, #006696, #0075a6 40%, #1083a6 70%, #0c80aa);
      }
      nav button {
        padding: 0 13px;
        font-family: var(--title-font);
        border: solid transparent;
        border-width: 3px 0;
      }
      nav button[aria-selected=true] { color: #f2b14e; border-bottom-color: #c3cf6a; }
      .fill { flex: 1; }
      nav tool-button { align-items: center; margin-left: 11px; padding-bottom: 2px; }
      .groups { display: flex; color: #33333c; }
      .stack { --arrow-gap: 8px; --tool-gap: 0; }
      .file { --cols: 74px 48px 45px 35px; --pad: 12px 4px 0 9px; }
      .clip { --cols: 46px 67px; --pad: 12px 1px 0 0; }
      .clip .stack { padding-left: 4px; }
      .edit { --cols: 84px 70px 72px; --pad: 6px 5px 0; }
      .table { --cols: 40px 44px 48px 52px; --pad: 6px 0 0 4px; }
      .data { --cols: 72px 90px; --pad: 6px 1px 0 4px; }
    `;
  }

  render() {
    return `
      <nav role="tablist">
        <button type="button" role="tab" aria-selected="true">Home</button>
        <button type="button" role="tab">Table Operations</button>
        <button type="button" role="tab">View</button>
        <span class="fill"></span>
        <tool-button icon="undo" w="16" h="16"></tool-button>
        <tool-button icon="redo" w="16" h="16"></tool-button>
        <tool-button icon="gear" w="16" h="16"></tool-button>
        <tool-button icon="help" w="16" h="16"></tool-button>
      </nav>
      <div class="groups">
        <ribbon-group class="file" label="File">
          <div class="stack">
            <tool-button icon="new" w="17" h="17" label="New"></tool-button>
            <tool-button icon="open" w="17" h="15" label="Open"></tool-button>
            <tool-button icon="open" w="17" h="15" label="Recent" menu></tool-button>
          </div>
          <tool-button large icon="reload" label="Reload"></tool-button>
          <tool-button large icon="floppy" label="Save" menu></tool-button>
          <tool-button large icon="closecircle" label="Close" menu></tool-button>
        </ribbon-group>
        <ribbon-group class="clip" label="Clipboard">
          <tool-button large icon="paste" label="Paste" menu></tool-button>
          <div class="stack">
            <tool-button icon="cut" label="Cut"></tool-button>
            <tool-button icon="copy" label="Copy"></tool-button>
            <tool-button icon="trash" label="Delete"></tool-button>
          </div>
        </ribbon-group>
        <ribbon-group class="edit" label="Edit">
          <tool-button large icon="axisprops" label="Axis properties"></tool-button>
          <tool-button large icon="comments" label="Comments"></tool-button>
          <tool-button large icon="resizeaxes" label="Resize axes"></tool-button>
        </ribbon-group>
        <ribbon-group class="table" label="Table">
          <tool-button large icon="insert" label="Insert" menu></tool-button>
          <tool-button large icon="addcell" label="Add" menu></tool-button>
          <tool-button large icon="removecell" label="Remove" menu></tool-button>
          <tool-button large icon="format" label="Format" menu></tool-button>
        </ribbon-group>
        <ribbon-group class="data" label="Data">
          <tool-button large icon="dataimport" label="Data Import"></tool-button>
          <tool-button large icon="digitizer" label="Graph Digitizer"></tool-button>
        </ribbon-group>
      </div>`;
  }
}

class TablePane extends UiElement {
  styles() {
    return `
      :host { display: grid; grid-template-rows: 28px 1fr; }
      .tab {
        align-self: end;
        display: flex;
        align-items: center;
        justify-content: space-between;
        width: 74px;
        height: 23px;
        margin-bottom: -1px;
        padding: 0 8px 0 9px;
        background: #fff;
        border: 1px solid #dcdcdc;
        border-bottom: 0;
        z-index: 1;
      }
      .tab button { color: #666; }
      .page {
        display: flex;
        flex-direction: column;
        padding: 3px 3px 2px;
        background: #fff;
        border: 1px solid #dcdcdc;
      }
      .format { display: flex; align-items: center; justify-content: space-between; height: 28px; }
      .format button { width: 27px; height: 27px; background: #dcdcdc; border: 1px solid #a8a8a8; }
      .sheet {
        flex: 1;
        margin-top: 5px;
        border: 1px solid #a4a4a4;
        background:
          linear-gradient(#ececec, #ececec) top / 100% 21px no-repeat,
          linear-gradient(#ececec, #ececec) left / 20px 100% no-repeat;
      }
      table { width: 172px; table-layout: fixed; border-collapse: collapse; }
      th, td {
        height: 21px;
        padding: 0 5px;
        border: 1px solid #a4a4a4;
        font-weight: 400;
        line-height: 15px;
      }
      tr:first-child > * { border-top: 0; }
      tr > :first-child { width: 20px; border-left: 0; }
      th { background: #dadada; }
      tr:first-child > td { background: #ececec; }
      tr:last-child td { background: #fff; text-align: right; }
    `;
  }

  render() {
    return `
      <div class="tab">
        <span>Table2</span>
        <button type="button" aria-label="Close tab"><ui-icon name="close" w="8" h="8"></ui-icon></button>
      </div>
      <div class="page">
        <div class="format">
          <span>Format:&nbsp; 1D Table</span>
          <button type="button" aria-label="Show plot"><ui-icon name="curve"></ui-icon></button>
        </div>
        <div class="sheet">
          <table>
            <tr><td></td><th scope="col">X</th><th scope="col">Y</th></tr>
            <tr><th scope="row">1</th><td>0</td><td>0</td></tr>
          </table>
        </div>
      </div>`;
  }
}

class PlotView extends UiElement {
  styles() {
    return `
      :host {
        display: grid;
        grid-template: 46px 1fr 43px / 59px 1fr 35px;
        position: relative;
        background: #fff;
        border: 1px solid #dcdcdc;
        color: #111;
      }
      .legend {
        grid-area: 1 / 2;
        justify-self: start;
        align-self: start;
        display: flex;
        align-items: center;
        gap: 4px;
        height: 26px;
        margin: 3px 0 0 20px;
        padding: 0 5px 0 4px;
        border: 1px solid #000;
      }
      .swatch { width: 18px; height: 2px; background: #c8474c; }
      .side { grid-area: 2 / 3; margin: 9px 0 0 13px; }
      .plot { grid-area: 2 / 2; width: 100%; height: 100%; overflow: visible; }
      .plot text { font: 700 11px "Liberation Sans", sans-serif; }
      .plot .x { font-weight: 400; }
      .mouse { position: absolute; left: 42%; top: 39%; }
    `;
  }

  render() {
    return `
      <div class="legend"><span class="swatch"></span>Y [null]</div>
      <svg class="plot" shape-rendering="crispEdges">${this.gridLines()}${this.axes()}</svg>
      <div class="swatch side"></div>
      <ui-icon class="mouse" name="mouse"></ui-icon>`;
  }

  gridLines() {
    let out = '';
    for (let i = 1; i < 20; i++) {
      const major = i % 5 === 0;
      const stroke = i === 10 ? 'stroke="#c8c8c8"'
        : `stroke="${major ? '#c8c8c8' : '#ececec'}" stroke-dasharray="${major ? '1 2' : '2 3'}"`;
      const p = `${i * 5}%`;
      out += `<line x1="${p}" x2="${p}" y1="0" y2="100%" ${stroke}/>`;
      out += `<line x1="0" x2="100%" y1="${p}" y2="${p}" ${stroke}/>`;
    }
    return `${out}<rect width="100%" height="100%" fill="none" stroke="#c8c8c8"/>`;
  }

  axes() {
    let out = '<g stroke="#000"><line x1="0" x2="0" y1="0" y2="100%"/><line x1="0" x2="100%" y1="100%" y2="100%"/></g>';
    for (let i = 0; i <= 20; i++) {
      const len = i % 5 === 0 ? 8 : 4;
      const p = `${i * 5}%`;
      out += `<line x1="-${len}" x2="0" y1="${p}" y2="${p}" stroke="#000"/>`;
      // Ticks below the axis are lines of a nested svg pinned to the bottom edge.
      out += `<svg y="100%" overflow="visible"><line x1="${p}" x2="${p}" y1="0" y2="${len}" stroke="#000"/></svg>`;
      if (i % 5 === 0) {
        const value = i / 10 - 1;
        out += `<text x="-13" y="${100 - i * 5}%" dy="4" text-anchor="end">${value.toFixed(1)}</text>`;
        out += `<text x="${p}" y="100%" dy="19" text-anchor="middle">${value.toFixed(1)}</text>`;
      }
    }
    return `${out}<text class="x" x="50%" y="100%" dy="36" text-anchor="middle">X</text>`;
  }
}

class PlotPane extends UiElement {
  styles() {
    return `
      :host { display: grid; grid-template-rows: 28px 1fr; color: #3a3a44; }
      .bar { display: flex; align-items: center; }
      tool-button { flex: none; min-width: 27px; --arrow-gap: 1px; }
      .sep { width: 1px; height: 20px; margin: 0 3px 0 7px; background: #cfcfcf; }
    `;
  }

  render() {
    const icon = (name, extra = '') => `<tool-button icon="${name}" ${extra}></tool-button>`;
    return `
      <div class="bar">
        ${['savetable', 'exporttable', 'print'].map((n) => icon(n)).join('')}
        ${icon('pointer', 'pressed')}
        ${['zoomglobe', 'zoomx'].map((n) => icon(n)).join('')}
        ${icon('zoomback', 'off')}
        ${icon('cube', 'off menu')}
        <span class="sep"></span>
        ${['cursor1', 'cursor2', 'cursor3'].map((n) => icon(n)).join('')}
        ${icon('cursorplay', 'off')}
        ${icon('copyplot')}
        ${icon('pasteplot', 'off')}
      </div>
      <plot-view></plot-view>`;
  }
}

class TableEditor extends UiElement {
  styles() {
    return `
      :host {
        display: flex;
        flex-direction: column;
        background: #fff;
        border: solid #e6e6e6;
        border-width: 1px 4px 1px 1px;
        box-shadow: 0 10px 40px 4px rgba(0, 0, 0, 0.5);
      }
      title-bar { --title-height: 32px; padding-left: 8px; color: #111; }
      .work {
        flex: 1;
        display: grid;
        grid-template-columns: 275px 1fr;
        gap: 5px;
        padding: 0 1px 7px 6px;
        background: #efefef;
      }
      footer { display: flex; justify-content: flex-end; align-items: flex-end; height: 18px; }
      .grip {
        width: 9px;
        height: 9px;
        margin: 2px;
        background: radial-gradient(#999 1px, transparent 1px) 0 0 / 3px 3px;
        clip-path: polygon(100% 0, 100% 100%, 0 100%);
      }
    `;
  }

  render() {
    return `
      <title-bar><ui-icon slot="icon" name="tablegrid"></ui-icon>Table Editor</title-bar>
      <editor-ribbon></editor-ribbon>
      <div class="work">
        <table-pane></table-pane>
        <plot-pane></plot-pane>
      </div>
      <footer><span class="grip"></span></footer>`;
  }
}

class AmesimApp extends UiElement {
  styles() {
    return `
      :host { display: flex; flex-direction: column; height: 100vh; position: relative; }
      .main-title { padding-left: 2px; color: #555; }
      .work { flex: 1; display: grid; grid-template-columns: auto 1fr 470px; min-height: 0; }
      .docks { display: flex; flex-direction: column; border-right: 1px solid #bbb; }
      .params { flex: 1; }
      footer {
        display: flex;
        justify-content: flex-end;
        align-items: center;
        height: 25px;
        padding-right: 13px;
        border-top: 1px solid #bbb;
        color: #444;
      }
      .shade { position: absolute; inset: 0; background: rgba(0, 0, 0, 0.5); }
      table-editor { position: absolute; inset: 172px 623px 150px 165px; }
    `;
  }

  render() {
    return `
      <title-bar class="main-title" max="restore">
        <ui-icon slot="icon" name="ame"></ui-icon>Simcenter Amesim - [unnamed_system]
      </title-bar>
      <app-header></app-header>
      <sketch-toolbar></sketch-toolbar>
      <div class="work">
        <side-tools></side-tools>
        <sketch-area></sketch-area>
        <div class="docks">
          <dock-panel heading="Library tree"><library-tree></library-tree></dock-panel>
          <dock-panel class="params" heading="Parameters"></dock-panel>
        </div>
      </div>
      <footer><ui-icon name="server"></ui-icon></footer>
      <div class="shade"></div>
      <table-editor></table-editor>`;
  }
}

customElements.define('ui-icon', UiIcon);
customElements.define('tool-button', ToolButton);
customElements.define('title-bar', TitleBar);
customElements.define('app-header', AppHeader);
customElements.define('sketch-toolbar', SketchToolbar);
customElements.define('side-tools', SideTools);
customElements.define('sketch-area', SketchArea);
customElements.define('dock-panel', DockPanel);
customElements.define('library-tree', LibraryTree);
customElements.define('ribbon-group', RibbonGroup);
customElements.define('editor-ribbon', EditorRibbon);
customElements.define('table-pane', TablePane);
customElements.define('plot-view', PlotView);
customElements.define('plot-pane', PlotPane);
customElements.define('table-editor', TableEditor);
customElements.define('amesim-app', AmesimApp);
</script>
</body>
</html>
